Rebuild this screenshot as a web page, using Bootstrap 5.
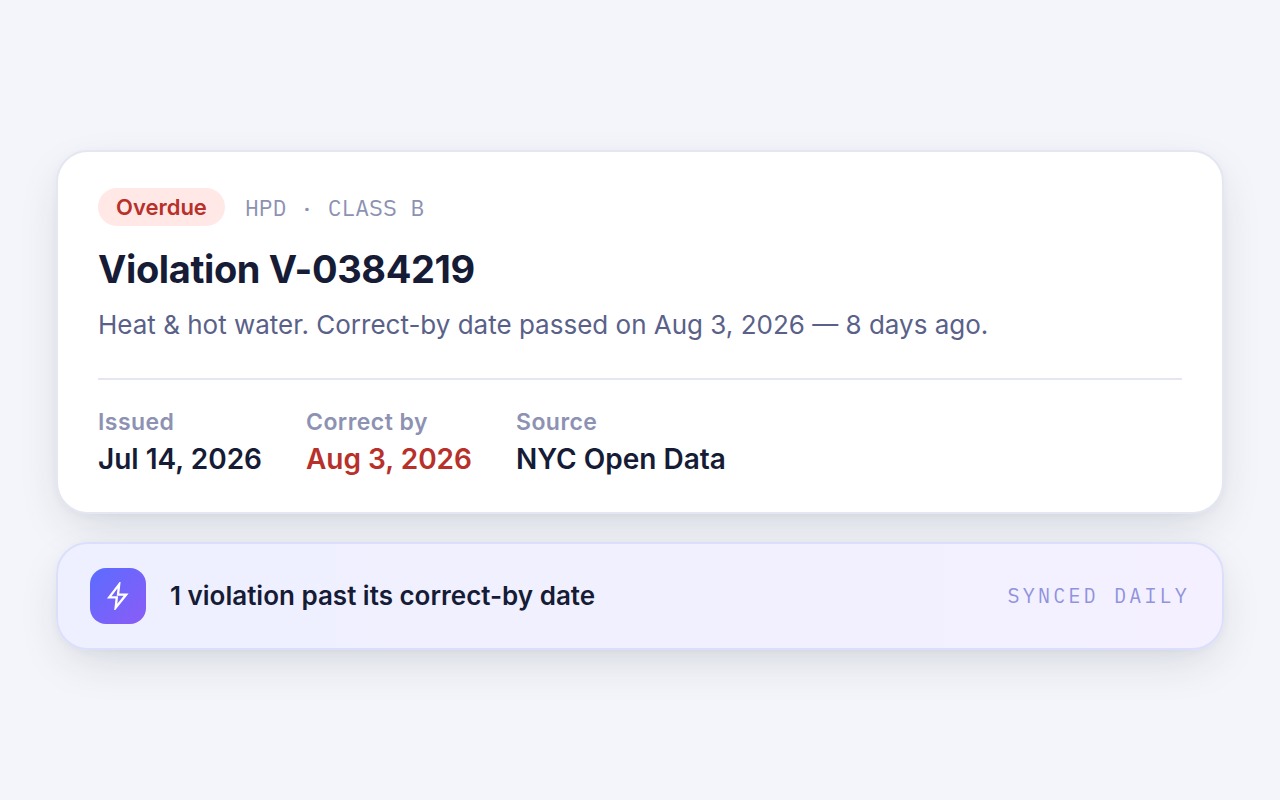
<!DOCTYPE html>
<html lang="en">
<head>
<meta charset="utf-8">
<meta name="viewport" content="width=device-width, initial-scale=1">
<title>Violation V-0384219</title>
<link href="https://cdn.jsdelivr.net/npm/bootstrap@5.3.0/dist/css/bootstrap.min.css" rel="stylesheet">
<style>
body{background:#f4f5fa;color:#161b36;font-family:Inter,sans-serif}
.page-pad{padding:56px}
.stack{gap:28px}
.panel{border:2px solid #e4e7f2;border-radius:32px;box-shadow:0 16px 48px -12px rgba(20,40,60,.18),0 2px 8px rgba(20,30,60,.03)}
.detail{background:#fff;padding:36px 40px}
.tags{gap:8px 20px}
.status{background:#ffe8e6;color:#b8302a;font-size:22px;line-height:26px;font-weight:600;padding:6px 18px}
.agency{font-family:"IBM Plex Mono","Liberation Mono",monospace;font-size:23px;line-height:28px;color:#8d92b3}
.heading{font-size:38px;line-height:46px;font-weight:700;letter-spacing:-.01em;margin:20px 0 0}
.summary{font-size:26px;line-height:38px;color:#5a6189;margin:14px 0 0}
.facts{border-top:2px solid #e4e7f2;margin-top:34px;padding-top:28px;gap:44px}
.facts dt{font-size:23px;line-height:28px;font-weight:600;letter-spacing:.02em;color:#8d92b3}
.facts dd{font-size:28px;line-height:34px;font-weight:600;margin:6px 0 0}
.late,.facts .late{color:#b8302a}
.notice{background:linear-gradient(90deg,#eef0ff,#f4f0ff);border-color:#dbdffb;padding:24px 32px}
.bolt{width:56px;height:56px;border-radius:16px;background:linear-gradient(135deg,#5b6cff,#8b5cf6)}
.notice-text{font-size:26px;line-height:36px;font-weight:600}
.sync{font-family:"IBM Plex Mono","Liberation Mono",monospace;font-size:20px;letter-spacing:.16em;color:#9093dd}
</style>
</head>
<body>
<main class="container-fluid page-pad min-vh-100 d-flex flex-column justify-content-center stack">
<article class="panel detail">
<div class="tags d-flex align-items-center flex-wrap">
<span class="status rounded-pill">Overdue</span><span class="agency">HPD · CLASS B</span>
</div>
<h1 class="heading">Violation V-0384219</h1>
<p class="summary">Heat &amp; hot water. Correct-by date passed on Aug 3, 2026 — 8 days ago.</p>
<dl class="facts d-flex flex-wrap mb-0">
<div><dt>Issued</dt><dd>Jul 14, 2026</dd></div>
<div><dt>Correct by</dt><dd class="late">Aug 3, 2026</dd></div>
<div><dt>Source</dt><dd>NYC Open Data</dd></div>
</dl>
</article>
<section class="panel notice d-flex align-items-center gap-4">
<span class="bolt d-flex align-items-center justify-content-center flex-shrink-0"><svg width="28" height="28" viewBox="0 0 24 24" fill="none" stroke="#fff" stroke-width="2" aria-hidden="true"><path d="M13 2 4.500 13.200H11L10 22l9-11.200h-7z"/></svg></span>
<span class="notice-text">1 violation past its correct-by date</span>
<span class="sync ms-auto">SYNCED DAILY</span>
</section>
</main>
<script src="https://cdn.jsdelivr.net/npm/bootstrap@5.3.0/dist/js/bootstrap.bundle.min.js"></script>
</body>
</html>
